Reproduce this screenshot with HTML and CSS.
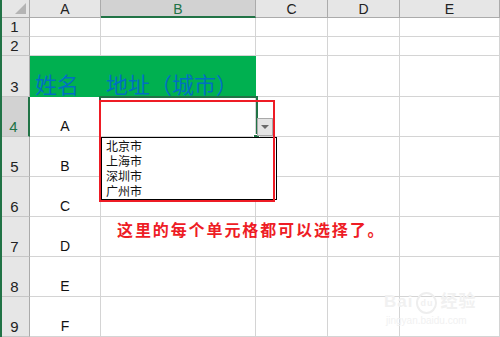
FILE: index.html
```html
<!DOCTYPE html>
<html lang="zh">
<head>
<meta charset="utf-8">
<link rel="stylesheet" href="styles.css">
</head>
<body>
<div class="sheet">
  <div class="grid">
    <div class="hd corner"><span class="tri"></span></div>
    <div class="hd col">A</div>
    <div class="hd col sel">B</div>
    <div class="hd col">C</div>
    <div class="hd col">D</div>
    <div class="hd col">E</div>

    <div class="hd row">1</div><div class="c"></div><div class="c"></div><div class="c"></div><div class="c"></div><div class="c"></div>
    <div class="hd row">2</div><div class="c"></div><div class="c"></div><div class="c"></div><div class="c"></div><div class="c"></div>
    <div class="hd row">3</div><div class="c fill big">姓名</div><div class="c fill big">地址（城市）</div><div class="c"></div><div class="c"></div><div class="c"></div>
    <div class="hd row rsel">4</div><div class="c v">A</div><div class="c"></div><div class="c"></div><div class="c"></div><div class="c"></div>
    <div class="hd row">5</div><div class="c v">B</div><div class="c"></div><div class="c"></div><div class="c"></div><div class="c"></div>
    <div class="hd row">6</div><div class="c v">C</div><div class="c"></div><div class="c"></div><div class="c"></div><div class="c"></div>
    <div class="hd row">7</div><div class="c v">D</div><div class="c"></div><div class="c"></div><div class="c"></div><div class="c"></div>
    <div class="hd row">8</div><div class="c v">E</div><div class="c"></div><div class="c"></div><div class="c"></div><div class="c"></div>
    <div class="hd row">9</div><div class="c v">F</div><div class="c"></div><div class="c"></div><div class="c"></div><div class="c"></div>
  </div>

  <div class="active"></div>
  <div class="handle"></div>
  <div class="ddbtn"><span class="arrow"></span></div>
  <ul class="list">
    <li>北京市</li>
    <li>上海市</li>
    <li>深圳市</li>
    <li>广州市</li>
  </ul>
  <div class="redbox"></div>
  <p class="note">这里的每个单元格都可以选择了。</p>
  <div class="mark">
    <div class="mark-top">Bai<span class="paw">du</span>经验</div>
    <div class="mark-url">jingyan.baidu.com</div>
  </div>
</div>
</body>
</html>
```

FILE: styles.css
```css
html, body {
  margin: 0;
  padding: 0;
  background: #fff;
}
.sheet {
  position: relative;
  width: 500px;
  height: 337px;
  overflow: hidden;
  font-family: "Liberation Sans", "Noto Sans CJK SC", sans-serif;
}
.grid {
  display: grid;
  grid-template-columns: 28px 71px 155px 72px 72px 100px;
  grid-template-rows: 18px 19px 19px 41px 40px 40px 40px 40px 40px 40px;
  border-left: 2px solid #217346;
  width: 498px;
}
.grid > div {
  box-sizing: border-box;
}
.hd {
  background: #e6e6e6;
  color: #222;
  font-size: 14px;
}
.corner {
  border-right: 1px solid #ababab;
  border-bottom: 1px solid #ababab;
  position: relative;
}
.tri {
  position: absolute;
  right: 3px;
  bottom: 3px;
  width: 0;
  height: 0;
  border-left: 11px solid transparent;
  border-bottom: 11px solid #b4b4b4;
}
.col {
  border-right: 1px solid #ababab;
  border-bottom: 1px solid #ababab;
  display: flex;
  align-items: center;
  justify-content: center;
  line-height: 1;
  padding-top: 1px;
}
.col.sel {
  background: #d2d2d2;
  color: #217346;
  border-bottom: 2px solid #217346;
}
.row {
  border-right: 1px solid #ababab;
  border-bottom: 1px solid #c6c6c6;
  display: flex;
  align-items: flex-end;
  justify-content: center;
  padding-bottom: 2px;
  padding-right: 2px;
  line-height: 1;
  font-size: 15px;
}
.row.rsel {
  background: #d2d2d2;
  color: #217346;
  border-right: 2px solid #217346;
  padding-right: 3px;
}
.c {
  border-right: 1px solid #d4d4d4;
  border-bottom: 1px solid #d4d4d4;
}
.fill {
  background: #00b050;
  border-color: #00b050;
}
.big {
  font-family: "Noto Sans CJK SC", sans-serif;
  font-weight: 400;
  color: #0070c0;
  font-size: 22px;
  line-height: 1;
  display: flex;
  align-items: flex-end;
  padding: 0 0 2px 5px;
}
.v {
  display: flex;
  align-items: flex-end;
  justify-content: center;
  font-size: 14px;
  line-height: 1;
  padding-bottom: 3px;
  color: #111;
}
.active {
  position: absolute;
  left: 99px;
  top: 96px;
  width: 155px;
  height: 40px;
  border: 2px solid #217346;
}
.handle {
  position: absolute;
  left: 253px;
  top: 134px;
  width: 5px;
  height: 5px;
  background: #217346;
  border: 1px solid #fff;
}
.ddbtn {
  position: absolute;
  left: 257px;
  top: 118px;
  width: 14px;
  height: 16px;
  background: #e4e4e4;
  border: 1px solid #a9a9a9;
  display: flex;
  align-items: center;
  justify-content: center;
}
.arrow {
  width: 0;
  height: 0;
  border-left: 4px solid transparent;
  border-right: 4px solid transparent;
  border-top: 4px solid #6a6a6a;
}
.list {
  position: absolute;
  left: 101px;
  top: 137px;
  width: 170px;
  height: 61px;
  margin: 0;
  padding: 0 0 0 4px;
  box-sizing: content-box;
  list-style: none;
  background: #fff;
  border: 1px solid #000;
  font-family: "Noto Sans CJK SC", sans-serif;
  font-size: 12px;
  color: #111;
}
.list li {
  margin: 0;
  padding: 0;
  height: 15px;
  line-height: 15px;
  overflow: hidden;
}
.redbox {
  position: absolute;
  left: 99px;
  top: 100px;
  width: 172px;
  height: 98px;
  border: 2px solid #ee1c25;
}
.note {
  position: absolute;
  left: 117px;
  top: 219px;
  margin: 0;
  font-family: "Noto Sans CJK SC", sans-serif;
  font-size: 16px;
  font-weight: 700;
  letter-spacing: 1.9px;
  line-height: 20px;
  color: #ee1c25;
  white-space: nowrap;
}
.mark {
  position: absolute;
  left: 384px;
  top: 292px;
  color: #f1f1f1;
  font-family: "Liberation Sans", "Noto Sans CJK SC", sans-serif;
}
.mark-top {
  font-size: 17px;
  font-weight: 700;
  line-height: 18px;
  letter-spacing: 1px;
}
.paw {
  display: inline-block;
  font-size: 9px;
  border: 2px solid #eeeeee;
  border-radius: 50%;
  padding: 0 2px;
  margin: 0 3px;
  vertical-align: middle;
}
.mark-url {
  font-size: 10px;
  line-height: 14px;
  padding-left: 2px;
}
```
